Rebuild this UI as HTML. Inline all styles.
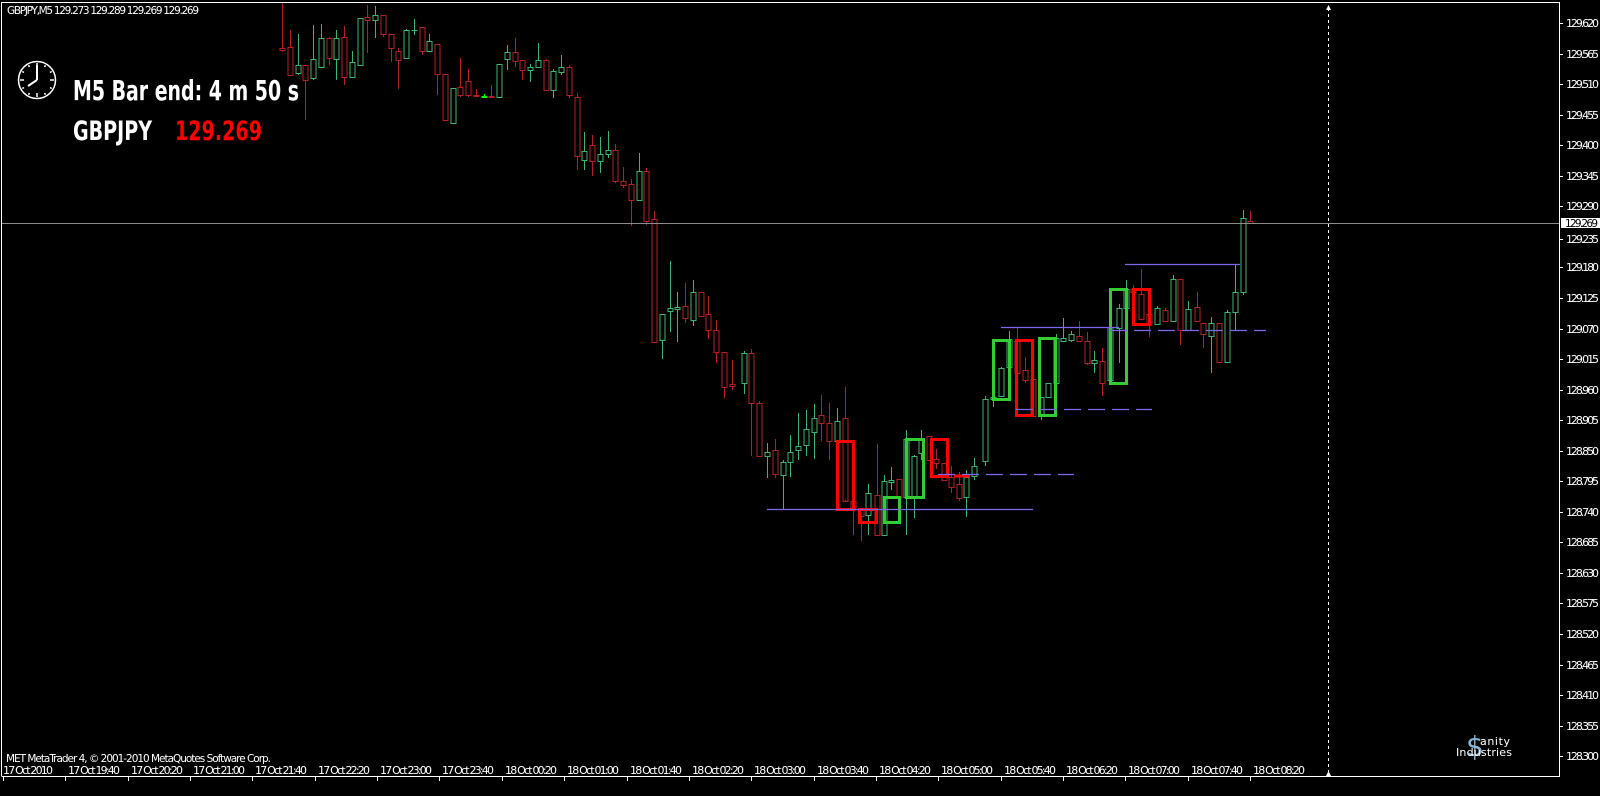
<!DOCTYPE html>
<html><head><meta charset="utf-8"><style>
html,body{margin:0;padding:0;background:#000;width:1600px;height:796px;overflow:hidden}
svg{display:block}
text{font-family:Tahoma,"DejaVu Sans","Liberation Sans",sans-serif}
</style></head><body>
<svg id="s" width="1600" height="796" viewBox="0 0 1600 796" xmlns="http://www.w3.org/2000/svg">
<rect width="1600" height="796" fill="#000"/>
<g id="axis" font-size="11" fill="#fff"></g>
<g id="cand"></g>
<path d="M1.5 776 V2.5 H1559.5 V776.5 H1.5" fill="none" stroke="#fff" stroke-width="1"/>
<line x1="2" y1="223.5" x2="1559" y2="223.5" stroke="#8c8c8c" stroke-width="1"/>
<line x1="1328.5" y1="8" x2="1328.5" y2="772" stroke="#fff" stroke-width="1" stroke-dasharray="3,3"/>
<path d="M1326 10 L1328.5 5 L1331 10 Z M1326 776 L1328.5 771 L1331 776 Z" fill="#fff"/>
<rect x="1561" y="218" width="39" height="10" fill="#fff"/>
<text x="1565" y="227" font-size="10.5" fill="#000" textLength="33">129.269</text>
<text x="7" y="14" font-size="10.5" fill="#fff" textLength="192">GBPJPY,M5  129.273 129.289 129.269 129.269</text>
<text x="6" y="762" font-size="10.5" fill="#fff" textLength="265">MET MetaTrader 4, © 2001-2010 MetaQuotes Software Corp.</text>
<g stroke="#fff" fill="none">
<circle cx="37" cy="80" r="18.5" stroke-width="1.5"/>
<g stroke-width="1.5" id="clockticks"></g>
<line x1="37" y1="80" x2="37" y2="65" stroke-width="2"/>
<line x1="37" y1="80" x2="28" y2="86" stroke-width="2"/>
</g>
<g font-family='"Liberation Sans Narrow","Liberation Sans",sans-serif' font-weight="bold" fill="#fff">
<text x="73" y="100" font-size="28" textLength="226" lengthAdjust="spacingAndGlyphs">M5 Bar end: 4 m 50 s</text>
<text x="73" y="140" font-size="27" textLength="79" lengthAdjust="spacingAndGlyphs">GBPJPY</text>
<text x="175" y="140" font-size="27" fill="#ff0000" textLength="87" lengthAdjust="spacingAndGlyphs">129.269</text>
</g>
<text x="1466" y="756" font-size="28" fill="#9fd8ff" font-family="Liberation Sans,sans-serif" opacity="0.85">$</text>
<text x="1480" y="745" font-size="11" fill="#fff" font-family="Liberation Sans,sans-serif" textLength="30">anity</text>
<text x="1456" y="756" font-size="11" fill="#fff" font-family="Liberation Sans,sans-serif" textLength="56">Industries</text>
</svg>
<script>
var NS="http://www.w3.org/2000/svg";
function el(p,t,a){var e=document.createElementNS(NS,t);for(var k in a)e.setAttribute(k,a[k]);p.appendChild(e);return e;}
var ck=document.getElementById('clockticks');
for(var i=0;i<12;i++){var a=i*Math.PI/6,r1=i%3==0?13:15,r2=17;el(ck,'line',{x1:37+r1*Math.sin(a),y1:80-r1*Math.cos(a),x2:37+r2*Math.sin(a),y2:80-r2*Math.cos(a)});}
var ax=document.getElementById('axis');
var prices=["129.620","129.565","129.510","129.455","129.400","129.345","129.290","129.235","129.180","129.125","129.070","129.015","128.960","128.905","128.850","128.795","128.740","128.685","128.630","128.575","128.520","128.465","128.410","128.355","128.300"];
prices.forEach(function(p,k){var y=Math.round(23+k*30.55);if(k==7)y+=2;el(ax,'line',{x1:1560,y1:y+0.5,x2:1563,y2:y+0.5,stroke:'#fff'});var t=el(ax,'text',{x:1566,y:y+4,textLength:33});t.textContent=p;});
var times=["17 Oct 2010","17 Oct 19:40","17 Oct 20:20","17 Oct 21:00","17 Oct 21:40","17 Oct 22:20","17 Oct 23:00","17 Oct 23:40","18 Oct 00:20","18 Oct 01:00","18 Oct 01:40","18 Oct 02:20","18 Oct 03:00","18 Oct 03:40","18 Oct 04:20","18 Oct 05:00","18 Oct 05:40","18 Oct 06:20","18 Oct 07:00","18 Oct 07:40","18 Oct 08:20"];
times.forEach(function(s,k){var x=Math.round(3+k*62.35);el(ax,'line',{x1:x+0.5,y1:777,x2:x+0.5,y2:781,stroke:'#fff'});var t=el(ax,'text',{x:x+(k?3:0),y:774,textLength:k==0?50:52});t.textContent=s;});
var c=document.getElementById('cand');
var A=[["r",48,50,3,52],["r",47,75,30,75],["g",65,73,34,75],["r",65,80,65,120],["g",59,78,25,80],["g",38,67,24,68],["r",38,58,37,65],["g",38,59,30,80],["r",37,77,26,85],["g",62,77,51,78],["g",18,65,18,65],["r",17,20,5,53],["g",15,20,6,38],["r",15,34,15,37],["r",34,48,34,62],["r",51,60,48,89],["g",30,58,29,59],["g",30,30,19,35],["r",27,51,27,55],["g",41,51,34,52],["r",44,74,44,95],["r",74,120,74,120],["g",88,123,88,124],["r",87,95,58,97],["r",81,95,69,97],["r",95,96,89,97],["l",96,97,94,97],["r",96,97,85,97],["g",64,97,64,97],["g",52,59,45,70],["r",52,61,38,67],["r",60,70,60,80],["g",67,70,64,82],["g",60,67,43,68],["r",60,90,59,90],["g",71,90,69,98],["g",67,72,55,75],["r",67,95,65,98],["r",97,156,93,170],["g",151,160,132,170],["r",145,161,135,176],["g",154,161,137,173],["g",150,154,131,158],["r",150,181,144,183],["r",181,185,167,188],["r",184,200,179,226],["g",171,200,153,200],["r",171,221,168,225],["r",219,342,211,342],["g",314,340,314,359],["g",308,311,261,332],["g",307,309,292,342],["r",306,318,283,323],["g",292,320,280,326],["r",292,316,292,316],["r",314,330,296,339],["r",330,352,320,363],["r",352,387,352,398],["r",384,386,360,390]];
var B=[[744,"g",353,383,351,394],[751,"r",353,403,349,456],[759,"r",403,456,401,456],[767,"g",452,456,443,478],[775,"r",450,474,439,478],[783,"g",462,475,460,509],[790,"g",452,462,435,477],[798,"g",446,450,413,460],[806,"g",429,445,410,456],[814,"g",418,432,404,459],[821,"r",415,423,395,441],[829,"r",423,441,403,460],[837,"g",421,441,408,442],[845,"r",418,501,387,500],[853,"r",501,508,501,535],[861,"r",509,516,509,541],[868,"g",493,515,484,535],[877,"r",495,535,444,535],[884,"g",481,535,475,535],[891,"g",480,482,467,490],[899,"r",479,497,479,497],[906,"g",439,497,430,535],[914,"g",456,496,455,518],[921,"g",439,453,430,460],[929,"r",436,460,436,460],[936,"r",459,463,449,469],[944,"r",463,480,463,480],[951,"r",477,487,466,493],[959,"r",484,498,472,501],[966,"g",477,497,470,517],[974,"g",466,476,458,480],[985,"g",399,461,396,466],[993,"g",397,399,396,407],[1001,"g",368,396,367,397],[1009,"g",339,367,331,367],[1017,"r",341,373,328,373],[1025,"r",370,380,357,383],[1033,"r",379,416,379,416],[1041,"g",397,416,397,420],[1048,"g",383,397,383,397],[1056,"g",338,383,334,383],[1063,"g",338,341,318,341],[1071,"g",334,340,331,342],[1079,"r",336,341,321,341],[1087,"r",341,363,332,365],[1094,"g",360,363,351,373],[1102,"r",361,383,348,396],[1110,"g",327,380,327,380],[1119,"g",308,328,304,363],[1126,"g",289,308,280,308],[1133,"r",289,292,285,292],[1141,"r",294,319,269,319],[1149,"r",314,324,314,337],[1157,"g",308,324,306,325],[1165,"r",310,321,308,321],[1173,"g",279,321,275,321],[1180,"r",279,330,279,345],[1188,"g",309,330,301,330],[1197,"r",307,321,292,321],[1203,"r",323,334,323,348],[1211,"g",323,336,317,373],[1219,"r",323,362,323,362],[1227,"g",312,362,310,362],[1235,"g",292,312,264,331],[1243,"g",218,292,210,295],[1250,"r",221,223,211,223]];
A.forEach(function(d,i){B.push([Math.round(282+i*7.75)].concat(d));});
var col={g:"#3cb371",r:"#b22222",l:"#00ff00"};
B.forEach(function(d){var x=d[0]+0.5,s=col[d[1]];
el(c,'line',{x1:x,y1:d[4],x2:x,y2:d[2],stroke:s});
el(c,'line',{x1:x,y1:d[3],x2:x,y2:d[5],stroke:s});
el(c,'rect',{x:x-2.5,y:d[2]+0.5,width:5,height:Math.max(0.1,d[3]-d[2]),fill:'none',stroke:s});});
[[837,441,853,509,"#ff0000"],[859,509,876,522,"#ff0000"],[884,497,899,522,"#32cd32"],[906,439,923,497,"#32cd32"],[931,439,947,476,"#ff0000"],[993,340,1009,399,"#32cd32"],[1016,340,1032,415,"#ff0000"],[1039,338,1055,415,"#32cd32"],[1110,289,1126,383,"#32cd32"],[1133,289,1149,324,"#ff0000"]].forEach(function(b){
el(c,'rect',{x:b[0]+0.5,y:b[1]+0.5,width:b[2]-b[0],height:b[3]-b[1],fill:'none',stroke:b[4],'stroke-width':3});});
el(c,'line',{x1:954,y1:476,x2:970,y2:476,stroke:'#ff0000','stroke-width':3});
var L="#7b68ee";
[[767,1033,509.5,null],[1001,1119,327.5,null],[1125,1240,264.5,null],[938,1074,474.5,"17,7"],[1016,1152,409.5,"17,7"],[1110,1266,330.5,"17,7"]].forEach(function(l){var a={x1:l[0],x2:l[1],y1:l[2],y2:l[2],stroke:L,'stroke-width':1.3};if(l[3])a['stroke-dasharray']=l[3];el(c,'line',a);});
</script>
</body></html>
